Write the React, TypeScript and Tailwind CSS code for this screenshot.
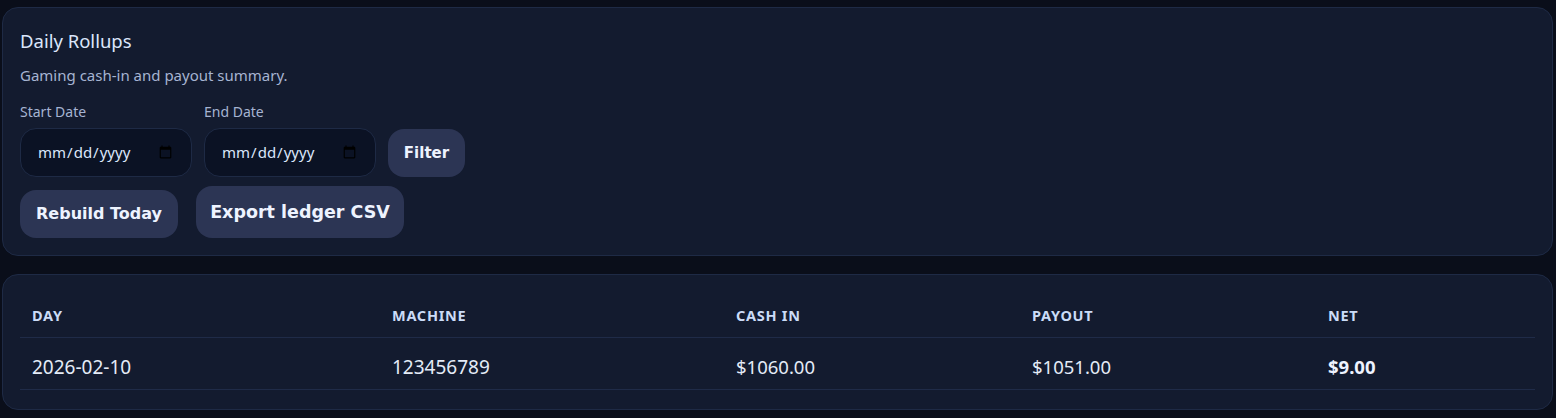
import { useState } from "react";

const rows = [
  { day: "2026-02-10", machine: "123456789", cashIn: "$1060.00", payout: "$1051.00", net: "$9.00" },
];

const DailyRollups = () => {
  const [startDate, setStartDate] = useState("");
  const [endDate, setEndDate] = useState("");

  return (
    <div className="min-h-screen bg-[#0a0e1a] pl-[2px] pr-[3px] pt-[7px] pb-2 font-['Noto_Sans',sans-serif]">
      <section className="rounded-2xl border border-[#1e2a45] bg-[#131b2f] px-[17px] pt-[20px] pb-[17px]">
        <h2 className="text-[18.5px] leading-[26px] text-[#dbe6fb]">Daily Rollups</h2>
        <p className="mt-[10px] text-[15px] leading-[22px] text-[#a6b4d2]">Gaming cash-in and payout summary.</p>
        <div className="mt-[16px] flex items-end gap-[12px]">
          <div className="flex flex-col">
            <label htmlFor="startDate" className="text-[14px] leading-5 text-[#a6b4d2]">Start Date</label>
            <input
              type="date"
              id="startDate"
              value={startDate}
              onChange={(e) => setStartDate(e.target.value)}
              className="mt-[6px] h-[49px] w-[172px] rounded-2xl border border-[#1e2a45] bg-[#0b1224] pl-4 pr-4 text-[15px] text-[#dbe6fb]"
            />
          </div>
          <div className="flex flex-col">
            <label htmlFor="endDate" className="text-[14px] leading-5 text-[#a6b4d2]">End Date</label>
            <input
              type="date"
              id="endDate"
              value={endDate}
              onChange={(e) => setEndDate(e.target.value)}
              className="mt-[6px] h-[49px] w-[172px] rounded-2xl border border-[#1e2a45] bg-[#0b1224] pl-4 pr-4 text-[15px] text-[#dbe6fb]"
            />
          </div>
          <button className="h-[48px] w-[77px] rounded-2xl bg-[#2c3554] font-['DejaVu_Sans',sans-serif] text-[15px] font-bold text-[#eef3ff]">
            Filter
          </button>
        </div>
        <div className="mt-[9px] flex items-end gap-[18px]">
          <button className="h-[48px] w-[158px] rounded-2xl bg-[#2c3554] font-['DejaVu_Sans',sans-serif] text-[16px] font-bold text-[#eef3ff]">
            Rebuild Today
          </button>
          <button className="h-[52px] w-[208px] rounded-2xl bg-[#2c3554] font-['DejaVu_Sans',sans-serif] text-[17.5px] font-bold text-[#eef3ff]">
            Export ledger CSV
          </button>
        </div>
      </section>

      <section className="mt-[18px] rounded-2xl border border-[#1e2a45] bg-[#131b2f] px-[17px] pt-[20px] pb-[19px]">
        <table className="w-full table-fixed border-collapse text-left">
          <thead>
            <tr className="border-b border-[#1f2b48]">
              <th className="w-[360px] h-[42px] px-3 text-[14.5px] font-bold uppercase tracking-wider text-[#cbdcf7]">Day</th>
              <th className="w-[344px] px-3 text-[14.5px] font-bold uppercase tracking-wider text-[#cbdcf7]">Machine</th>
              <th className="w-[296px] px-3 text-[14.5px] font-bold uppercase tracking-wider text-[#cbdcf7]">Cash In</th>
              <th className="w-[296px] px-3 text-[14.5px] font-bold uppercase tracking-wider text-[#cbdcf7]">Payout</th>
              <th className="px-3 text-[14.5px] font-bold uppercase tracking-wider text-[#cbdcf7]">Net</th>
            </tr>
          </thead>
          <tbody>
            {rows.map((r) => (
              <tr key={r.day + r.machine} className="border-b border-[#1f2b48]">
                <td className="h-[52px] px-3 pt-[8px] text-[19px] text-[#e4ebf7]">{r.day}</td>
                <td className="px-3 pt-[8px] text-[19px] text-[#e4ebf7]">{r.machine}</td>
                <td className="px-3 pt-[8px] text-[18.5px] text-[#e4ebf7]">{r.cashIn}</td>
                <td className="px-3 pt-[8px] text-[18.5px] text-[#e4ebf7]">{r.payout}</td>
                <td className="px-3 pt-[8px] text-[18.5px] font-bold text-[#eef3ff]">{r.net}</td>
              </tr>
            ))}
          </tbody>
        </table>
      </section>
    </div>
  );
};

export default function App() {
  return <DailyRollups />;
}
